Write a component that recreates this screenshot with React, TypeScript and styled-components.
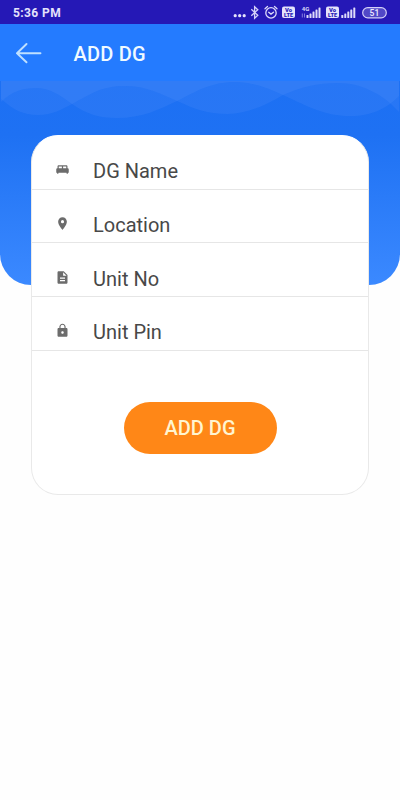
import React from "react";
import styled, { createGlobalStyle } from "styled-components";

const GlobalStyle = createGlobalStyle`
  * { box-sizing: border-box; }
  body { margin: 0; background: #fefefe; font-family: Roboto, sans-serif; }
`;

const Screen = styled.div`
  width: 400px;
  height: 800px;
  overflow: hidden;
  background: #fefefe;
`;

const StatusBar = styled.div`
  height: 24px;
  padding: 1px 13px 0;
  display: flex;
  align-items: center;
  justify-content: space-between;
  background: #2518b6;
  color: #e4e2fb;
`;

const Clock = styled.span`
  font-size: 12px;
  font-weight: 700;
  line-height: 24px;
  letter-spacing: 0.4px;
`;

const StatusIcons = styled.svg`
  display: block;
  width: 155px;
  height: 23px;
`;

const AppBar = styled.header`
  height: 57px;
  display: flex;
  align-items: center;
  padding: 0 16px;
  background: #247bff;
`;

const BackButton = styled.button`
  border: 0;
  padding: 0;
  width: 57.5px;
  height: 24px;
  background: transparent;
  color: #bfe0ff;
`;

const Title = styled.h1`
  margin: 3px 0 0;
  font-size: 20px;
  font-weight: 500;
  line-height: 24px;
  letter-spacing: 0.2px;
  color: #f0faff;
`;

const Hero = styled.main`
  position: relative;
  height: 204px;
  padding: 54px 31px 0;
  border-radius: 0 0 31px 31px;
  background: linear-gradient(#1c70f4 0, #1e71f3 54px, #3b89ff 100%);
`;

const Waves = styled.svg`
  position: absolute;
  top: 0;
  left: 0;
`;

const Card = styled.form`
  position: relative;
  height: 360px;
  border: 1px solid #e9e9e9;
  border-top-color: #fff;
  border-radius: 27px;
  background: #fff;
  overflow: hidden;
`;

const Field = styled.label`
  height: 53.7px;
  display: flex;
  align-items: center;
  padding: 18px 0 0 23px;
  border-bottom: 1px solid #e6e6e6;
  color: #484848;
`;

const FieldIcon = styled.svg`
  width: 15px;
  height: 15px;
  margin-right: 23px;
  margin-top: -3px;
  fill: #6c6c6c;
`;

const FieldName = styled.span`
  font-size: 20px;
  line-height: 24px;
`;

const SubmitButton = styled.button`
  display: block;
  width: 153px;
  height: 52px;
  margin: 51px auto 0;
  padding: 1px 0 0;
  border: 0;
  border-radius: 26px;
  background: #ff8717;
  color: #fff5d0;
  font: 500 20px/24px Roboto, sans-serif;
`;

const fields = [
  {
    name: "DG Name",
    icon: "M20 10V7c0-1.1-.9-2-2-2H6c-1.1 0-2 .9-2 2v3c-1.1 0-2 .9-2 2v5h1.33L4 19h1l.67-2h12.67l.66 2h1l.67-2H22v-5c0-1.1-.9-2-2-2zm-9 0H6V7h5v3zm7 0h-5V7h5v3z",
  },
  {
    name: "Location",
    icon: "M12 2C8.13 2 5 5.13 5 9c0 5.25 7 13 7 13s7-7.75 7-13c0-3.87-3.13-7-7-7zm0 9.5a2.5 2.5 0 0 1 0-5 2.5 2.5 0 0 1 0 5z",
  },
  {
    name: "Unit No",
    icon: "M14 2H6c-1.1 0-1.99.9-1.99 2L4 20c0 1.1.89 2 1.99 2H18c1.1 0 2-.9 2-2V8l-6-6zm2 16H8v-2h8v2zm0-4H8v-2h8v2zm-3-5V3.5L18.5 9H13z",
  },
  {
    name: "Unit Pin",
    icon: "M18 8h-1V6c0-2.76-2.24-5-5-5S7 3.24 7 6v2H6c-1.1 0-2 .9-2 2v10c0 1.1.9 2 2 2h12c1.1 0 2-.9 2-2V10c0-1.1-.9-2-2-2zm-6 9c-1.1 0-2-.9-2-2s.9-2 2-2 2 .9 2 2-.9 2-2 2zm3.1-9H8.9V6c0-1.71 1.39-3.1 3.1-3.1s3.1 1.39 3.1 3.1v2z",
  },
];

const Signal = ({ x }: { x: number }) => (
  <g fill="#dedbfa">
    {[3, 4.5, 6.5, 8.5, 10.5].map((h, i) => (
      <rect key={i} x={x + i * 3} y={17.5 - h} width="2" height={h} rx="0.6" />
    ))}
  </g>
);

const VoLte = ({ x }: { x: number }) => (
  <g>
    <rect x={x} y="6" width="13" height="11.5" rx="2" fill="#e4e2fb" />
    <g fill="#2518b6" fontFamily="Roboto, sans-serif" fontWeight="900" textAnchor="middle">
      <text x={x + 6.5} y="11.4" fontSize="5.8">Vo</text>
      <text x={x + 6.5} y="16.6" fontSize="5.6">LTE</text>
    </g>
  </g>
);

export default function App() {
  return (
    <Screen>
      <GlobalStyle />
      <StatusBar>
        <Clock>5:36 PM</Clock>
        <StatusIcons viewBox="232 0.5 155 23">
          <g fill="#e4e2fb">
            <circle cx="235.2" cy="15.2" r="1.6" />
            <circle cx="239.7" cy="15.2" r="1.6" />
            <circle cx="244.2" cy="15.2" r="1.6" />
          </g>
          <path d="M251.3 8.8l6.5 6-3.2 3V6.2l3.2 3-6.5 6" fill="none" stroke="#d4d0f8" strokeWidth="1.3" />
          <g fill="none" stroke="#dedbfa" strokeWidth="1.3" strokeLinecap="round">
            <circle cx="271" cy="12.4" r="5.2" />
            <path d="M265 8.2l2.5-2.2M277 8.2l-2.5-2.2M268.7 11.8l2.3 1.8 2.5-1.9" />
          </g>
          <VoLte x={282} />
          <text x="301.8" y="10.3" fontFamily="Roboto, sans-serif" fontSize="6" fontWeight="700" fill="#dedbfa">4G</text>
          <path d="M302.3 17v-4M304.5 13v4" stroke="#8e87e3" strokeWidth=".9" />
          <Signal x={306.5} />
          <VoLte x={326} />
          <Signal x={341.3} />
          <rect x="362.7" y="7.1" width="23.6" height="10.2" rx="5.1" fill="#5148c7" stroke="#d4d0f8" strokeWidth="1.2" />
          <text x="374.4" y="15.3" textAnchor="middle" fontFamily="Roboto, sans-serif" fontSize="8.5" fontWeight="500" fill="#eeecff">51</text>
        </StatusIcons>
      </StatusBar>
      <AppBar>
        <BackButton type="button" aria-label="Back">
          <svg width="26" height="22" viewBox="0 0 26 22" fill="none" stroke="currentColor" strokeWidth="1.9" strokeLinecap="round" strokeLinejoin="round" display="block">
            <path d="M10.5 2L1 11.3l9.5 9M1 11.3h23.5" />
          </svg>
        </BackButton>
        <Title>ADD DG</Title>
      </AppBar>
      <Hero>
        <Waves width="400" height="45" viewBox="0 81 400 45" fill="#8db0ff" fillOpacity=".1">
          <path d="M1 81V102C12 91 23 88 36 88C50 88 60 95 72 104C87 114 98 118 117 118C142 118 158 110 177 101C197 91 211 82 235 82C253 82 267 88 283 95C309 107 325 116 350 116C373 116 387 108 399 96V81Z" />
          <path d="M1 81V99C14 110 23 115 38 115C53 115 62 109 72 104C91 94 101 86 125 86C147 86 161 94 177 101C195 109 207 114 228 114C247 114 266 105 283 95C301 87 317 83 338 83C362 83 379 94 390 103L399 112V81Z" />
        </Waves>
        <Card onSubmit={(event) => event.preventDefault()}>
          {fields.map(({ name, icon }) => (
            <Field key={name}>
              <FieldIcon viewBox="0 0 24 24"><path d={icon} /></FieldIcon>
              <FieldName>{name}</FieldName>
            </Field>
          ))}
          <SubmitButton type="submit">ADD DG</SubmitButton>
        </Card>
      </Hero>
    </Screen>
  );
}
